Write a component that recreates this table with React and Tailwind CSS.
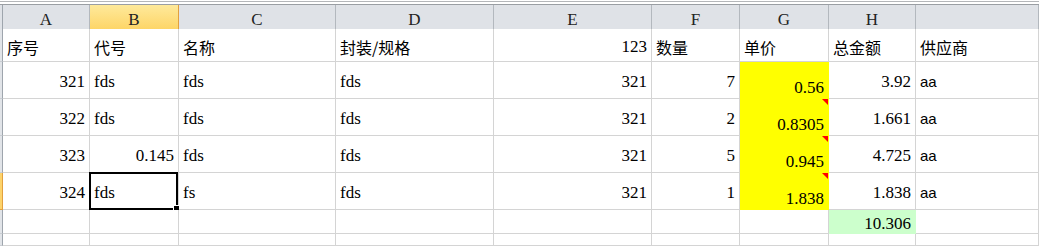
import React from "react";

// column widths: row-header strip, then A..I
const grid = "grid grid-cols-[3px_87px_89px_157px_158px_158px_88px_89px_87px_123px]";
const serif = "font-['Liberation_Serif','Noto_Sans_CJK_SC',serif] text-[17px]";
const cjk = "font-['Noto_Sans_CJK_SC',sans-serif] text-[16px]";
const sans = "font-['Liberation_Sans',sans-serif] text-[15px]";

const letters = ["A", "B", "C", "D", "E", "F", "G", "H", ""];

// each row: [height class, cells]
// cell: { v, r (right aligned), f (font), fill, tri (comment mark), sel }
const rows = [
  {
    h: "h-[33px]",
    cells: [
      { v: "序号", f: cjk },
      { v: "代号", f: cjk },
      { v: "名称", f: cjk },
      { v: "封装/规格", f: cjk },
      { v: "123", r: true },
      { v: "数量", f: cjk },
      { v: "单价", f: cjk },
      { v: "总金额", f: cjk },
      { v: "供应商", f: cjk },
    ],
  },
  {
    h: "h-[37px]",
    cells: [
      { v: "321", r: true },
      { v: "fds" },
      { v: "fds" },
      { v: "fds" },
      { v: "321", r: true },
      { v: "7", r: true },
      { v: "0.56", r: true, fill: "yellow" },
      { v: "3.92", r: true },
      { v: "aa", f: sans },
    ],
  },
  {
    h: "h-[37px]",
    cells: [
      { v: "322", r: true },
      { v: "fds" },
      { v: "fds" },
      { v: "fds" },
      { v: "321", r: true },
      { v: "2", r: true },
      { v: "0.8305", r: true, fill: "yellow", tri: true },
      { v: "1.661", r: true },
      { v: "aa", f: sans },
    ],
  },
  {
    h: "h-[37px]",
    cells: [
      { v: "323", r: true },
      { v: "0.145", r: true },
      { v: "fds" },
      { v: "fds" },
      { v: "321", r: true },
      { v: "5", r: true },
      { v: "0.945", r: true, fill: "yellow", tri: true },
      { v: "4.725", r: true },
      { v: "aa", f: sans },
    ],
  },
  {
    h: "h-[37px]",
    active: true,
    cells: [
      { v: "324", r: true },
      { v: "fds", sel: true },
      { v: "fs" },
      { v: "fds" },
      { v: "321", r: true },
      { v: "1", r: true },
      { v: "1.838", r: true, fill: "yellow", tri: true },
      { v: "1.838", r: true },
      { v: "aa", f: sans },
    ],
  },
  {
    h: "h-[24px]",
    cells: [{}, {}, {}, {}, {}, {}, {}, { v: "10.306", r: true, fill: "green" }, {}],
  },
  {
    h: "h-[12px]",
    cells: [{}, {}, {}, {}, {}, {}, {}, {}, {}],
  },
];

function Cell({ c }) {
  let box = "border-[#d4d4d4] bg-white";
  let place = "items-center pt-[4px]";
  if (c.fill === "yellow") {
    box = "border-[#ffff00] bg-[#ffff00]";
    place = "items-end pb-[1px]";
  }
  if (c.fill === "green") box = "border-[#ccffcc] bg-[#ccffcc]";

  return (
    <div
      className={`relative flex overflow-visible border-r border-b px-[4px] text-black leading-[18px] whitespace-nowrap ${box} ${place} ${
        c.r ? "justify-end" : "justify-start"
      } ${c.f || serif}`}
    >
      {c.v}
      {c.tri && (
        <span className="absolute right-0 top-0 h-[6px] w-[6px] bg-[#ff0000] [clip-path:polygon(0_0,100%_0,100%_100%)]" />
      )}
      {c.sel && (
        <span className="absolute -left-[1px] -top-[1px] right-0 -bottom-[1px] border-2 border-black pointer-events-none">
          <span className="absolute -right-[4px] -bottom-[4px] h-[7px] w-[7px] bg-black border border-white" />
        </span>
      )}
    </div>
  );
}

export default function App() {
  return (
    <div className="w-[1039px] h-[246px] overflow-hidden bg-white select-none">
      {/* window edge above the sheet */}
      <div className="h-px bg-white" />
      <div className="h-px bg-[#b4b6b9]" />
      <div className="h-[2px] bg-white" />
      <div className="h-px bg-[#9a9ea3]" />

      {/* column letters */}
      <div className={`${grid} h-[24px]`}>
        <div className="bg-[#dfe2e7] border-r border-b border-[#9ea5ad]" />
        {letters.map((l, i) =>
          i === 1 ? (
            <div
              key={i}
              className={`flex items-center justify-center pt-[2px] border-r border-b border-[#e2a03e] bg-gradient-to-b from-[#fee99a] to-[#fdd25c] text-[#222] ${serif}`}
            >
              {l}
            </div>
          ) : (
            <div
              key={i}
              className={`flex items-center justify-center pt-[2px] border-r border-b border-[#b3b8be] bg-[#dfe2e7] text-[#222] ${serif}`}
            >
              {l}
            </div>
          )
        )}
      </div>

      {rows.map((row, ri) => (
        <div key={ri} className={`${grid} ${row.h}`}>
          {row.active ? (
            <div className="bg-[#fdd36a] border-r border-b border-[#e2a03e]" />
          ) : (
            <div className="bg-[#e1e4e8] border-r border-b border-r-[#9ea5ad] border-b-[#c9cdd2]" />
          )}
          {row.cells.map((c, ci) => (
            <Cell key={ci} c={c} />
          ))}
        </div>
      ))}
    </div>
  );
}
